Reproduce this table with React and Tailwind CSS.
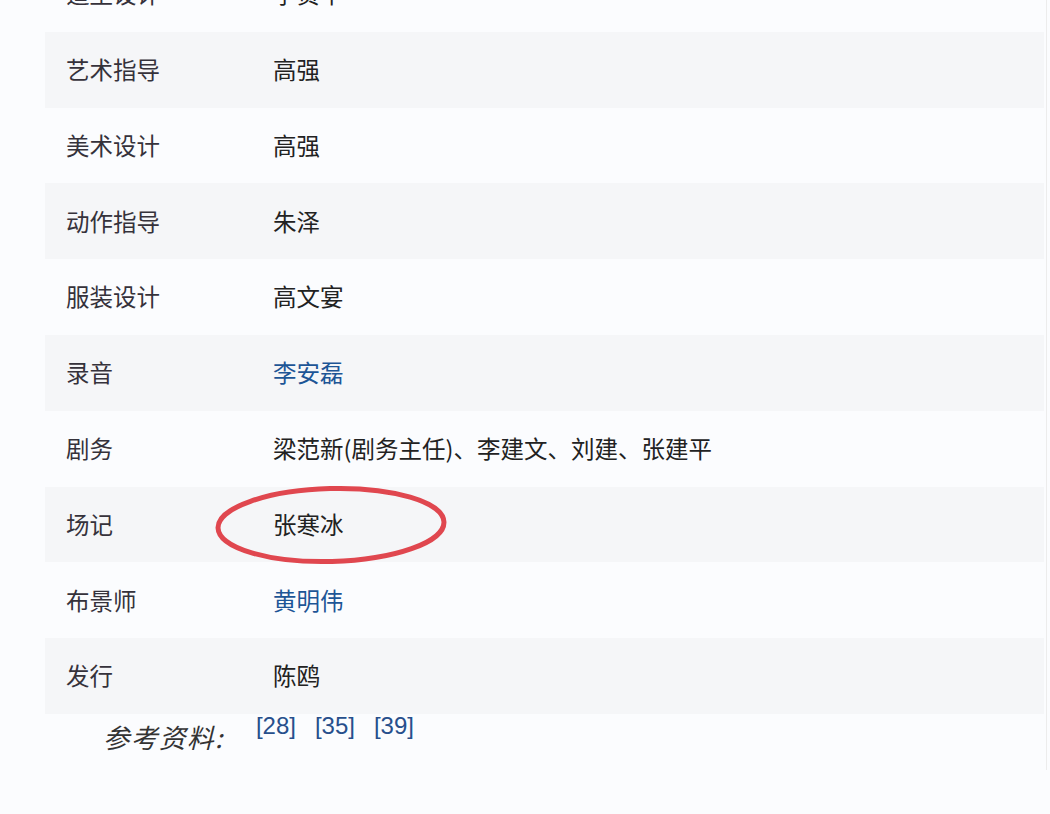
const rows = [
  { label: '造型设计', value: '李贵平' },
  { label: '艺术指导', value: '高强' },
  { label: '美术设计', value: '高强' },
  { label: '动作指导', value: '朱泽' },
  { label: '服装设计', value: '高文宴' },
  { label: '录音', value: '李安磊', link: true },
  { label: '剧务', value: '梁范新(剧务主任)、李建文、刘建、张建平' },
  { label: '场记', value: '张寒冰', circled: true },
  { label: '布景师', value: '黄明伟', link: true },
  { label: '发行', value: '陈鸥' },
];

export default function App() {
  return (
    <div
      className="h-[814px] w-[1050px] overflow-hidden bg-[#fbfcfe]"
      style={{ fontFamily: '"Noto Sans CJK SC", "Noto Sans", sans-serif' }}
    >
      <div className="h-full w-[1047px] border-r border-[#ececec] pl-[45px] pr-[2px]">
        <div className="-mt-[44px]">
          {rows.map((row, i) => (
            <div
              key={row.label}
              className={`relative flex h-[75.8px] items-center text-[23.5px] ${i % 2 === 1 ? 'bg-[#f5f6f8]' : ''}`}
            >
              <div className="w-[228px] shrink-0 pl-[21px] text-[#35323b]">{row.label}</div>
              <div className={row.link ? 'text-[#1d5596]' : 'text-[#222222]'}>{row.value}</div>
              {row.circled && (
                <svg
                  className="absolute left-[168px] top-[-4px]"
                  width="236"
                  height="84"
                  viewBox="0 0 236 84"
                >
                  <ellipse
                    cx="118"
                    cy="42"
                    rx="113"
                    ry="36.5"
                    fill="none"
                    stroke="#e0474f"
                    strokeWidth="5"
                    transform="rotate(-1.5 118 42)"
                  />
                </svg>
              )}
            </div>
          ))}
        </div>
        <div className="flex items-start pl-[58px]">
          <span className="mt-[6px] text-[26.5px] italic leading-[1.3] tracking-[1.5px] text-[#333333]">参考资料:</span>
          <div
            className="-mt-[2px] ml-[32px] flex gap-[19px] text-[24px] leading-[1.2] text-[#274f8c]"
            style={{ fontFamily: '"Liberation Sans", Arial, sans-serif' }}
          >
            <span>[28]</span>
            <span>[35]</span>
            <span>[39]</span>
          </div>
        </div>
      </div>
    </div>
  );
}
